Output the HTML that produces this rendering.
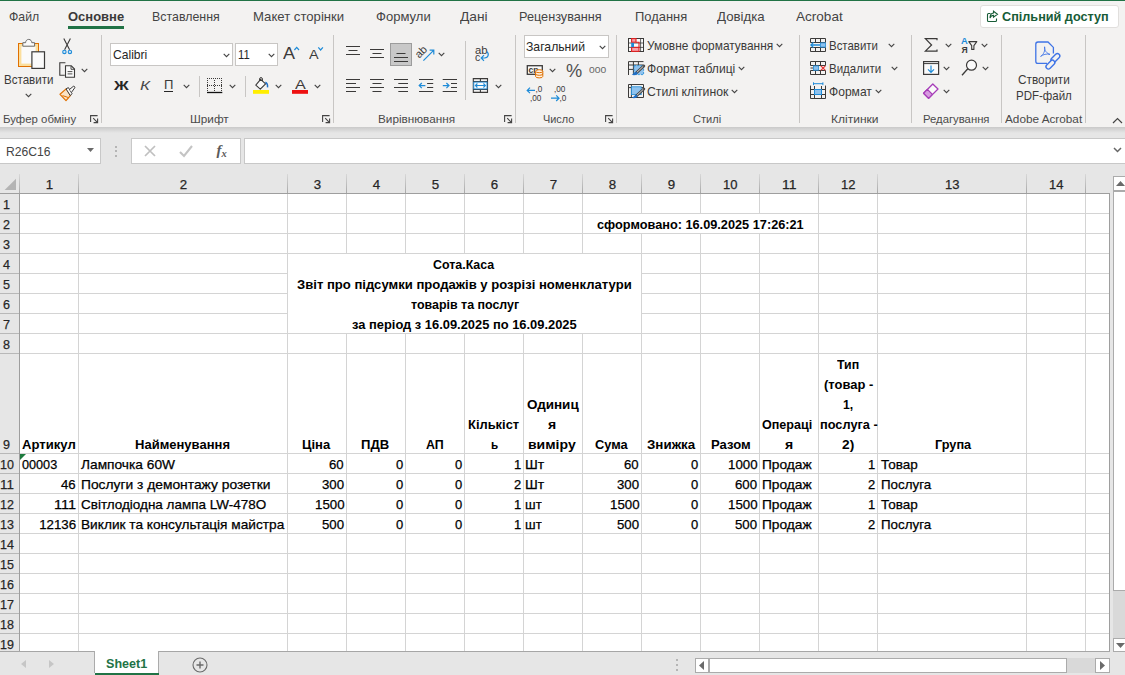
<!DOCTYPE html>
<html lang="uk"><head><meta charset="utf-8"><title>Excel</title>
<style>
html,body{margin:0;padding:0;}
body{width:1125px;height:675px;overflow:hidden;position:relative;background:#e6e6e6;font-family:"Liberation Sans",sans-serif;}
div{position:absolute;}
svg{position:absolute;overflow:visible;}
.t{position:absolute;white-space:nowrap;display:block;}
</style></head>
<body>
<div style="left:0px;top:0px;width:1125px;height:127px;background:#f3f2f1;"></div>
<div style="left:0px;top:0px;width:1125px;height:1px;background:#217346;"></div>
<div style="left:0px;top:127px;width:1125px;height:6px;background:linear-gradient(#c9c9c9,#e6e6e6);"></div>
<div style="left:0px;top:138px;width:101px;height:26px;background:#fff;border:1px solid #c8c8c8;box-sizing:border-box;border-left:none;"></div>
<div style="left:131px;top:138px;width:110px;height:26px;background:#fff;border:1px solid #c8c8c8;box-sizing:border-box;"></div>
<div style="left:244px;top:138px;width:881px;height:26px;background:#fff;border:1px solid #c8c8c8;box-sizing:border-box;border-right:none;"></div>
<div style="left:20px;top:194px;width:1089px;height:457px;background:#fff;"></div>
<div style="left:0px;top:193px;width:1110px;height:1px;background:#9e9e9e;"></div>
<div style="left:19px;top:174px;width:1px;height:19px;background:linear-gradient(#d8d8d8,#a8a8a8);"></div>
<div style="left:78px;top:174px;width:1px;height:19px;background:linear-gradient(#d8d8d8,#a8a8a8);"></div>
<div style="left:287px;top:174px;width:1px;height:19px;background:linear-gradient(#d8d8d8,#a8a8a8);"></div>
<div style="left:346px;top:174px;width:1px;height:19px;background:linear-gradient(#d8d8d8,#a8a8a8);"></div>
<div style="left:405px;top:174px;width:1px;height:19px;background:linear-gradient(#d8d8d8,#a8a8a8);"></div>
<div style="left:464px;top:174px;width:1px;height:19px;background:linear-gradient(#d8d8d8,#a8a8a8);"></div>
<div style="left:523px;top:174px;width:1px;height:19px;background:linear-gradient(#d8d8d8,#a8a8a8);"></div>
<div style="left:582px;top:174px;width:1px;height:19px;background:linear-gradient(#d8d8d8,#a8a8a8);"></div>
<div style="left:641px;top:174px;width:1px;height:19px;background:linear-gradient(#d8d8d8,#a8a8a8);"></div>
<div style="left:700px;top:174px;width:1px;height:19px;background:linear-gradient(#d8d8d8,#a8a8a8);"></div>
<div style="left:759px;top:174px;width:1px;height:19px;background:linear-gradient(#d8d8d8,#a8a8a8);"></div>
<div style="left:818px;top:174px;width:1px;height:19px;background:linear-gradient(#d8d8d8,#a8a8a8);"></div>
<div style="left:877px;top:174px;width:1px;height:19px;background:linear-gradient(#d8d8d8,#a8a8a8);"></div>
<div style="left:1026px;top:174px;width:1px;height:19px;background:linear-gradient(#d8d8d8,#a8a8a8);"></div>
<div style="left:1085px;top:174px;width:1px;height:19px;background:linear-gradient(#d8d8d8,#a8a8a8);"></div>
<div style="left:19px;top:194px;width:1px;height:458px;background:#9e9e9e;"></div>
<div style="left:0px;top:213px;width:19px;height:1px;background:#b8b8b8;"></div>
<div style="left:0px;top:233px;width:19px;height:1px;background:#b8b8b8;"></div>
<div style="left:0px;top:253px;width:19px;height:1px;background:#b8b8b8;"></div>
<div style="left:0px;top:273px;width:19px;height:1px;background:#b8b8b8;"></div>
<div style="left:0px;top:293px;width:19px;height:1px;background:#b8b8b8;"></div>
<div style="left:0px;top:313px;width:19px;height:1px;background:#b8b8b8;"></div>
<div style="left:0px;top:333px;width:19px;height:1px;background:#b8b8b8;"></div>
<div style="left:0px;top:353px;width:19px;height:1px;background:#b8b8b8;"></div>
<div style="left:0px;top:453px;width:19px;height:1px;background:#b8b8b8;"></div>
<div style="left:0px;top:473px;width:19px;height:1px;background:#b8b8b8;"></div>
<div style="left:0px;top:493px;width:19px;height:1px;background:#b8b8b8;"></div>
<div style="left:0px;top:513px;width:19px;height:1px;background:#b8b8b8;"></div>
<div style="left:0px;top:533px;width:19px;height:1px;background:#b8b8b8;"></div>
<div style="left:0px;top:553px;width:19px;height:1px;background:#b8b8b8;"></div>
<div style="left:0px;top:573px;width:19px;height:1px;background:#b8b8b8;"></div>
<div style="left:0px;top:593px;width:19px;height:1px;background:#b8b8b8;"></div>
<div style="left:0px;top:613px;width:19px;height:1px;background:#b8b8b8;"></div>
<div style="left:0px;top:633px;width:19px;height:1px;background:#b8b8b8;"></div>
<div style="left:1109px;top:194px;width:1px;height:458px;background:#9e9e9e;"></div>
<div style="left:0px;top:651px;width:1110px;height:1px;background:#a6a6a6;"></div>
<div style="left:20px;top:213px;width:1089px;height:1px;background:#d4d4d4;"></div>
<div style="left:20px;top:233px;width:1089px;height:1px;background:#d4d4d4;"></div>
<div style="left:20px;top:253px;width:1089px;height:1px;background:#d4d4d4;"></div>
<div style="left:20px;top:273px;width:268px;height:1px;background:#d4d4d4;"></div>
<div style="left:641px;top:273px;width:468px;height:1px;background:#d4d4d4;"></div>
<div style="left:20px;top:293px;width:268px;height:1px;background:#d4d4d4;"></div>
<div style="left:641px;top:293px;width:468px;height:1px;background:#d4d4d4;"></div>
<div style="left:20px;top:313px;width:268px;height:1px;background:#d4d4d4;"></div>
<div style="left:641px;top:313px;width:468px;height:1px;background:#d4d4d4;"></div>
<div style="left:20px;top:333px;width:1089px;height:1px;background:#d4d4d4;"></div>
<div style="left:20px;top:353px;width:1089px;height:1px;background:#d4d4d4;"></div>
<div style="left:20px;top:453px;width:1089px;height:1px;background:#d4d4d4;"></div>
<div style="left:20px;top:473px;width:1089px;height:1px;background:#d4d4d4;"></div>
<div style="left:20px;top:493px;width:1089px;height:1px;background:#d4d4d4;"></div>
<div style="left:20px;top:513px;width:1089px;height:1px;background:#d4d4d4;"></div>
<div style="left:20px;top:533px;width:1089px;height:1px;background:#d4d4d4;"></div>
<div style="left:20px;top:553px;width:1089px;height:1px;background:#d4d4d4;"></div>
<div style="left:20px;top:573px;width:1089px;height:1px;background:#d4d4d4;"></div>
<div style="left:20px;top:593px;width:1089px;height:1px;background:#d4d4d4;"></div>
<div style="left:20px;top:613px;width:1089px;height:1px;background:#d4d4d4;"></div>
<div style="left:20px;top:633px;width:1089px;height:1px;background:#d4d4d4;"></div>
<div style="left:78px;top:194px;width:1px;height:457px;background:#d4d4d4;"></div>
<div style="left:287px;top:194px;width:1px;height:457px;background:#d4d4d4;"></div>
<div style="left:346px;top:194px;width:1px;height:59px;background:#d4d4d4;"></div>
<div style="left:346px;top:334px;width:1px;height:317px;background:#d4d4d4;"></div>
<div style="left:405px;top:194px;width:1px;height:59px;background:#d4d4d4;"></div>
<div style="left:405px;top:334px;width:1px;height:317px;background:#d4d4d4;"></div>
<div style="left:464px;top:194px;width:1px;height:59px;background:#d4d4d4;"></div>
<div style="left:464px;top:334px;width:1px;height:317px;background:#d4d4d4;"></div>
<div style="left:523px;top:194px;width:1px;height:59px;background:#d4d4d4;"></div>
<div style="left:523px;top:334px;width:1px;height:317px;background:#d4d4d4;"></div>
<div style="left:582px;top:194px;width:1px;height:59px;background:#d4d4d4;"></div>
<div style="left:582px;top:334px;width:1px;height:317px;background:#d4d4d4;"></div>
<div style="left:641px;top:194px;width:1px;height:19px;background:#d4d4d4;"></div>
<div style="left:641px;top:234px;width:1px;height:417px;background:#d4d4d4;"></div>
<div style="left:700px;top:194px;width:1px;height:19px;background:#d4d4d4;"></div>
<div style="left:700px;top:234px;width:1px;height:417px;background:#d4d4d4;"></div>
<div style="left:759px;top:194px;width:1px;height:19px;background:#d4d4d4;"></div>
<div style="left:759px;top:234px;width:1px;height:417px;background:#d4d4d4;"></div>
<div style="left:818px;top:194px;width:1px;height:457px;background:#d4d4d4;"></div>
<div style="left:877px;top:194px;width:1px;height:457px;background:#d4d4d4;"></div>
<div style="left:1026px;top:194px;width:1px;height:457px;background:#d4d4d4;"></div>
<div style="left:1085px;top:194px;width:1px;height:457px;background:#d4d4d4;"></div>
<svg style="left:20px;top:454px" width="6" height="6"><path d="M0 0H6L0 6Z" fill="#1e7b3e"/></svg>
<svg style="left:4px;top:178px" width="13" height="13"><path d="M12 0.8V12H0.6Z" fill="#b4b4b4"/></svg>
<div style="left:68px;top:26px;width:56px;height:3px;background:#217346;"></div>
<div style="left:980px;top:5px;width:139px;height:23px;background:#fff;border:1px solid #e1dfdd;box-sizing:border-box;border-radius:3px;"></div>
<svg style="left:986px;top:10px" width="13" height="13" viewBox="0 0 13 13" fill="none" stroke="#185c37" stroke-width="1.1"><path d="M4.5 3.5H2.5a1 1 0 0 0-1 1v6a1 1 0 0 0 1 1h7a1 1 0 0 0 1-1V8.5"/><path d="M7.5 1.2 11.5 4.2 7.5 7.2V5.4C5.6 5.4 4.6 6.3 4 8 4 5 5.4 3.2 7.5 3Z"/></svg>
<div style="left:101px;top:35px;width:1px;height:88px;background:#c8c6c4;"></div>
<div style="left:333px;top:35px;width:1px;height:88px;background:#c8c6c4;"></div>
<div style="left:515px;top:35px;width:1px;height:88px;background:#c8c6c4;"></div>
<div style="left:616px;top:35px;width:1px;height:88px;background:#c8c6c4;"></div>
<div style="left:799px;top:35px;width:1px;height:88px;background:#c8c6c4;"></div>
<div style="left:911px;top:35px;width:1px;height:88px;background:#c8c6c4;"></div>
<div style="left:1001px;top:35px;width:1px;height:88px;background:#c8c6c4;"></div>
<div style="left:1085px;top:35px;width:1px;height:88px;background:#c8c6c4;"></div>
<div style="left:199px;top:76px;width:1px;height:21px;background:#c8c6c4;"></div>
<div style="left:245px;top:76px;width:1px;height:21px;background:#c8c6c4;"></div>
<div style="left:465px;top:41px;width:1px;height:59px;background:#c8c6c4;"></div>
<svg style="left:89.5px;top:115px" width="9" height="9" viewBox="0 0 9 9" fill="none" stroke="#444" stroke-width="1.1"><path d="M0.6 7V0.6H7.6"/><path d="M3.2 3.2 7.6 7.6M7.6 3.6V7.6H3.6"/></svg>
<svg style="left:321.5px;top:115px" width="9" height="9" viewBox="0 0 9 9" fill="none" stroke="#444" stroke-width="1.1"><path d="M0.6 7V0.6H7.6"/><path d="M3.2 3.2 7.6 7.6M7.6 3.6V7.6H3.6"/></svg>
<svg style="left:503.5px;top:115px" width="9" height="9" viewBox="0 0 9 9" fill="none" stroke="#444" stroke-width="1.1"><path d="M0.6 7V0.6H7.6"/><path d="M3.2 3.2 7.6 7.6M7.6 3.6V7.6H3.6"/></svg>
<svg style="left:604.5px;top:115px" width="9" height="9" viewBox="0 0 9 9" fill="none" stroke="#444" stroke-width="1.1"><path d="M0.6 7V0.6H7.6"/><path d="M3.2 3.2 7.6 7.6M7.6 3.6V7.6H3.6"/></svg>
<svg style="left:1112px;top:117px" width="11" height="7" viewBox="0 0 11 7" fill="none" stroke="#444" stroke-width="1.2"><path d="M1 6 5.5 1.5 10 6"/></svg>
<svg style="left:25.1px;top:93px" width="7" height="5" viewBox="0 0 7 5" fill="none" stroke="#444" stroke-width="1.1"><path d="M0.7 0.8 3.5 3.6 6.3 0.8"/></svg>
<svg style="left:81.1px;top:68px" width="7" height="5" viewBox="0 0 7 5" fill="none" stroke="#444" stroke-width="1.1"><path d="M0.7 0.8 3.5 3.6 6.3 0.8"/></svg>
<div style="left:110px;top:43px;width:123px;height:23px;background:#fff;border:1px solid #c8c6c4;box-sizing:border-box;"></div>
<div style="left:235px;top:43px;width:43px;height:23px;background:#fff;border:1px solid #c8c6c4;box-sizing:border-box;"></div>
<svg style="left:222.5px;top:53px" width="7" height="5" viewBox="0 0 7 5" fill="none" stroke="#444" stroke-width="1.1"><path d="M0.7 0.8 3.5 3.6 6.3 0.8"/></svg>
<svg style="left:267.8px;top:53px" width="7" height="5" viewBox="0 0 7 5" fill="none" stroke="#444" stroke-width="1.1"><path d="M0.7 0.8 3.5 3.6 6.3 0.8"/></svg>
<div style="left:164px;top:91px;width:9px;height:1px;background:#262626;"></div>
<svg style="left:182.7px;top:84px" width="7" height="5" viewBox="0 0 7 5" fill="none" stroke="#444" stroke-width="1.1"><path d="M0.7 0.8 3.5 3.6 6.3 0.8"/></svg>
<svg style="left:228.7px;top:84px" width="7" height="5" viewBox="0 0 7 5" fill="none" stroke="#444" stroke-width="1.1"><path d="M0.7 0.8 3.5 3.6 6.3 0.8"/></svg>
<svg style="left:275.0px;top:84px" width="7" height="5" viewBox="0 0 7 5" fill="none" stroke="#444" stroke-width="1.1"><path d="M0.7 0.8 3.5 3.6 6.3 0.8"/></svg>
<svg style="left:313.8px;top:84px" width="7" height="5" viewBox="0 0 7 5" fill="none" stroke="#444" stroke-width="1.1"><path d="M0.7 0.8 3.5 3.6 6.3 0.8"/></svg>
<div style="left:524px;top:35px;width:85px;height:23px;background:#fff;border:1px solid #c8c6c4;box-sizing:border-box;"></div>
<svg style="left:598.9px;top:45.4px" width="7" height="5" viewBox="0 0 7 5" fill="none" stroke="#444" stroke-width="1.1"><path d="M0.7 0.8 3.5 3.6 6.3 0.8"/></svg>
<svg style="left:549.0px;top:68.2px" width="7" height="5" viewBox="0 0 7 5" fill="none" stroke="#444" stroke-width="1.1"><path d="M0.7 0.8 3.5 3.6 6.3 0.8"/></svg>
<svg style="left:775.8px;top:43.3px" width="7" height="5" viewBox="0 0 7 5" fill="none" stroke="#444" stroke-width="1.1"><path d="M0.7 0.8 3.5 3.6 6.3 0.8"/></svg>
<svg style="left:738.0px;top:66.3px" width="7" height="5" viewBox="0 0 7 5" fill="none" stroke="#444" stroke-width="1.1"><path d="M0.7 0.8 3.5 3.6 6.3 0.8"/></svg>
<svg style="left:731.0px;top:89.3px" width="7" height="5" viewBox="0 0 7 5" fill="none" stroke="#444" stroke-width="1.1"><path d="M0.7 0.8 3.5 3.6 6.3 0.8"/></svg>
<svg style="left:887.8px;top:43.3px" width="7" height="5" viewBox="0 0 7 5" fill="none" stroke="#444" stroke-width="1.1"><path d="M0.7 0.8 3.5 3.6 6.3 0.8"/></svg>
<svg style="left:891.0px;top:66.3px" width="7" height="5" viewBox="0 0 7 5" fill="none" stroke="#444" stroke-width="1.1"><path d="M0.7 0.8 3.5 3.6 6.3 0.8"/></svg>
<svg style="left:875.1px;top:89.3px" width="7" height="5" viewBox="0 0 7 5" fill="none" stroke="#444" stroke-width="1.1"><path d="M0.7 0.8 3.5 3.6 6.3 0.8"/></svg>
<svg style="left:944.5px;top:43.3px" width="7" height="5" viewBox="0 0 7 5" fill="none" stroke="#444" stroke-width="1.1"><path d="M0.7 0.8 3.5 3.6 6.3 0.8"/></svg>
<svg style="left:981.3px;top:43.3px" width="7" height="5" viewBox="0 0 7 5" fill="none" stroke="#444" stroke-width="1.1"><path d="M0.7 0.8 3.5 3.6 6.3 0.8"/></svg>
<svg style="left:942.5px;top:66.3px" width="7" height="5" viewBox="0 0 7 5" fill="none" stroke="#444" stroke-width="1.1"><path d="M0.7 0.8 3.5 3.6 6.3 0.8"/></svg>
<svg style="left:981.5px;top:66.3px" width="7" height="5" viewBox="0 0 7 5" fill="none" stroke="#444" stroke-width="1.1"><path d="M0.7 0.8 3.5 3.6 6.3 0.8"/></svg>
<svg style="left:942.5px;top:89.3px" width="7" height="5" viewBox="0 0 7 5" fill="none" stroke="#444" stroke-width="1.1"><path d="M0.7 0.8 3.5 3.6 6.3 0.8"/></svg>
<svg style="left:438.0px;top:52.4px" width="7" height="5" viewBox="0 0 7 5" fill="none" stroke="#444" stroke-width="1.1"><path d="M0.7 0.8 3.5 3.6 6.3 0.8"/></svg>
<svg style="left:495.0px;top:84px" width="7" height="5" viewBox="0 0 7 5" fill="none" stroke="#444" stroke-width="1.1"><path d="M0.7 0.8 3.5 3.6 6.3 0.8"/></svg>
<svg style="left:87px;top:148px" width="7" height="4"><path d="M0 0H7L3.5 4Z" fill="#6a6a6a"/></svg>
<div style="left:115px;top:146px;width:2px;height:2px;background:#b5b5b5;"></div>
<div style="left:115px;top:150px;width:2px;height:2px;background:#b5b5b5;"></div>
<div style="left:115px;top:155px;width:2px;height:2px;background:#b5b5b5;"></div>
<svg style="left:144px;top:145px" width="12" height="12" viewBox="0 0 12 12" fill="none" stroke="#c0c0c0" stroke-width="1.7"><path d="M1 1 11 11M11 1 1 11"/></svg>
<svg style="left:179px;top:145px" width="14" height="12" viewBox="0 0 14 12" fill="none" stroke="#c4c4c4" stroke-width="2.1"><path d="M1 7 5 11 13 1"/></svg>
<span class="t" style="left:216.5px;top:141px;font:italic bold 15px 'Liberation Serif',serif;color:#5a5a5a;line-height:18px">f<span style="font-size:10.5px;position:relative;top:1.5px">x</span></span>
<svg style="left:1113px;top:147px" width="9" height="6" viewBox="0 0 9 6" fill="none" stroke="#666" stroke-width="1.5"><path d="M1 1 4.5 4.5 8 1"/></svg>
<div style="left:95px;top:651px;width:64px;height:24px;background:#fff;"></div>
<div style="left:94px;top:651px;width:1px;height:22px;background:#ababab;"></div>
<div style="left:158px;top:651px;width:1px;height:22px;background:#ababab;"></div>
<div style="left:95px;top:673px;width:64px;height:2px;background:#217346;"></div>
<svg style="left:21px;top:660px" width="5" height="8"><path d="M5 0V8L0 4Z" fill="#c6c6c6"/></svg>
<svg style="left:49px;top:660px" width="5" height="8"><path d="M0 0V8L5 4Z" fill="#c6c6c6"/></svg>
<svg style="left:192px;top:657px" width="16" height="16" viewBox="0 0 16 16" fill="none" stroke="#6a6a6a" stroke-width="1.1"><circle cx="8" cy="8" r="7"/><path d="M8 4.5V11.5M4.5 8H11.5" stroke-width="1.4"/></svg>
<div style="left:676px;top:659px;width:2px;height:2px;background:#b5b5b5;"></div>
<div style="left:676px;top:664px;width:2px;height:2px;background:#b5b5b5;"></div>
<div style="left:676px;top:669px;width:2px;height:2px;background:#b5b5b5;"></div>
<div style="left:695px;top:658px;width:14px;height:15px;background:#fff;border:1px solid #ababab;box-sizing:border-box;"></div>
<svg style="left:699px;top:661px" width="5" height="9"><path d="M5 0V9L0 4.5Z" fill="#6a6a6a"/></svg>
<div style="left:709px;top:658px;width:386px;height:15px;background:#d9d9d9;"></div>
<div style="left:709px;top:658px;width:358px;height:15px;background:#fff;border:1px solid #ababab;box-sizing:border-box;"></div>
<div style="left:1095px;top:658px;width:15px;height:15px;background:#fff;border:1px solid #ababab;box-sizing:border-box;"></div>
<svg style="left:1100px;top:661px" width="5" height="9"><path d="M0 0V9L5 4.5Z" fill="#6a6a6a"/></svg>
<div style="left:1113px;top:176px;width:12px;height:476px;background:#d9d9d9;"></div>
<div style="left:1113px;top:176px;width:13px;height:15px;background:#fff;border:1px solid #ababab;box-sizing:border-box;"></div>
<svg style="left:1116px;top:181px" width="9" height="5"><path d="M0 5H9L4.5 0Z" fill="#6a6a6a"/></svg>
<div style="left:1113px;top:191px;width:13px;height:400px;background:#fff;border:1px solid #ababab;box-sizing:border-box;"></div>
<div style="left:1113px;top:638px;width:13px;height:14px;background:#fff;border:1px solid #ababab;box-sizing:border-box;"></div>
<svg style="left:1116px;top:643px" width="9" height="5"><path d="M0 0H9L4.5 5Z" fill="#6a6a6a"/></svg>
<svg style="left:0;top:0" width="1125" height="135" viewBox="0 0 1125 135"><rect x="18" y="43" width="21" height="24" fill="#e07000"/>
<rect x="19" y="44" width="19" height="22" fill="#fbdf9e"/>
<rect x="21.4" y="46.4" width="14.2" height="17.2" fill="#fafafa"/>
<path d="M22.8 46.2V42.7H25.6C25.6 41 26.8 39.4 28.7 39.4C30.6 39.4 31.8 41 31.8 42.7H34.6V46.2Z" fill="#fafafa" stroke="#6a6a6a" stroke-width="1"/>
<rect x="31.9" y="51.8" width="12.6" height="16.6" fill="#fafafa" stroke="#3b3a39" stroke-width="1.2"/>
<path d="M63.8 38.6 69.6 49.8M70.4 38.6 64.6 49.8" stroke="#3b3a39" stroke-width="1.1" fill="none"/>
<circle cx="64.4" cy="51.9" r="1.7" fill="#cfe6f7" stroke="#1e8bd8" stroke-width="1.1"/><circle cx="69.9" cy="51.9" r="1.7" fill="#cfe6f7" stroke="#1e8bd8" stroke-width="1.1"/>
<path d="M64.8 75.2H59.8V62.7H65.4" stroke="#3b3a39" stroke-width="1.1" fill="none"/>
<path d="M65.5 65.8H71.3L74.5 69V77.3H65.5Z" fill="#fafafa" stroke="#3b3a39" stroke-width="1.1"/><path d="M71 66V69.3H74.3" stroke="#3b3a39" stroke-width="0.9" fill="none"/><path d="M67.6 71.6H72.4M67.6 73.9H72.4" stroke="#3b3a39" stroke-width="0.9"/>
<path d="M60 94.3 66.4 88.6 70.6 95.4 66 100.6Z" fill="#fbe3c5" stroke="#e07000" stroke-width="1.2" stroke-linejoin="round"/><path d="M62.5 95.6 68.6 97.6" stroke="#e07000" stroke-width="1"/>
<path d="M66 88.9 68.4 87.6 72 93.6 70.3 95.6Z" fill="#fafafa" stroke="#3b3a39" stroke-width="1"/><path d="M69.6 89.4 73 86.6A1 1 0 0 1 74.6 88L71.6 92.2" fill="#fafafa" stroke="#3b3a39" stroke-width="1"/>
<path d="M294.4 50 296.7 47.4 299 50" stroke="#1e8bd8" stroke-width="1.2" fill="none"/>
<path d="M318.3 47.4 320.6 50 322.9 47.4" stroke="#1e8bd8" stroke-width="1.2" fill="none"/>
<path d="M207 78h1v1h-1zM207 85h1v1h-1zM209 78h1v1h-1zM209 85h1v1h-1zM211 78h1v1h-1zM211 85h1v1h-1zM213 78h1v1h-1zM213 85h1v1h-1zM215 78h1v1h-1zM215 85h1v1h-1zM217 78h1v1h-1zM217 85h1v1h-1zM219 78h1v1h-1zM219 85h1v1h-1zM221 78h1v1h-1zM221 85h1v1h-1zM207 80h1v1h-1zM214 80h1v1h-1zM221 80h1v1h-1zM207 82h1v1h-1zM214 82h1v1h-1zM221 82h1v1h-1zM207 84h1v1h-1zM214 84h1v1h-1zM221 84h1v1h-1zM207 86h1v1h-1zM214 86h1v1h-1zM221 86h1v1h-1zM207 88h1v1h-1zM214 88h1v1h-1zM221 88h1v1h-1zM207 90h1v1h-1zM214 90h1v1h-1zM221 90h1v1h-1z" fill="#3b3a39"/><path d="M207 92.5H222.3" stroke="#111" stroke-width="1.3"/>
<path d="M255.8 85.2 260.6 79.4 265.6 83.8 260.3 89.2Z" fill="#fafafa" stroke="#3b3a39" stroke-width="1.1" stroke-linejoin="round"/><path d="M259.6 80.4V79A1.4 1.4 0 0 1 262.4 79V81" fill="none" stroke="#3b3a39" stroke-width="1"/>
<path d="M265.4 82.2C267.2 83 267.8 85 267.5 87.4" stroke="#1e6fc8" stroke-width="1.5" fill="none"/>
<rect x="253" y="90" width="16" height="3.8" fill="#ffee00"/>
<rect x="292" y="90" width="16" height="3.8" fill="#ee1111"/>
<path d="M346 46.5H360M348.5 50.5H357.5M346 54.5H360" stroke="#3b3a39" stroke-width="1.1" fill="none"/>
<path d="M370 49.5H384M372.5 53.5H381.5M370 57.5H384" stroke="#3b3a39" stroke-width="1.1" fill="none"/>
<rect x="390.5" y="43.5" width="21" height="22" fill="#c8c8c8" stroke="#9c9c9c" stroke-width="1"/>
<path d="M396.5 53.5H405.5M394 57.5H408M394 61.5H408" stroke="#3b3a39" stroke-width="1.1" fill="none"/>
<path d="M346 79.5H360M346 83.5H356M346 87.5H360M346 91.5H356" stroke="#3b3a39" stroke-width="1.1" fill="none"/>
<path d="M370 79.5H384M372.5 83.5H381.5M370 87.5H384M372.5 91.5H381.5" stroke="#3b3a39" stroke-width="1.1" fill="none"/>
<path d="M394 79.5H408M398.3 83.5H408M394 87.5H408M398.3 91.5H408" stroke="#3b3a39" stroke-width="1.1" fill="none"/>
<path d="M419 79.5H433.2M427.1 83.5H433.2M427.1 87.5H433.2M419 91.5H433.2" stroke="#3b3a39" stroke-width="1.1" fill="none"/>
<path d="M442.7 79.5H457M451 83.5H457M451 87.5H457M442.7 91.5H457" stroke="#3b3a39" stroke-width="1.1" fill="none"/>
<path d="M419.2 85.6H425.4M421.8 83 419.2 85.6 421.8 88.2" stroke="#1e8bd8" stroke-width="1.2" fill="none"/>
<path d="M442.8 85.6H449M446.4 83 449 85.6 446.4 88.2" stroke="#1e8bd8" stroke-width="1.2" fill="none"/>
<text transform="translate(423.6 54.4) rotate(-45)" font-family="Liberation Sans, sans-serif" font-size="11" fill="#3b3a39" text-anchor="middle">ab</text>
<path d="M423.4 60.6 433.6 50.4M429.6 50.2H433.8V54.4" stroke="#1e8bd8" stroke-width="1.2" fill="none"/>
<text x="475" y="53.6" font-family="Liberation Sans, sans-serif" font-size="10.5" fill="#3b3a39" textLength="12.6" lengthAdjust="spacingAndGlyphs">ab</text><text x="475" y="61" font-family="Liberation Sans, sans-serif" font-size="10.5" fill="#3b3a39">c</text>
<path d="M486.6 51.5C489.4 53.4 488.6 58 484.6 58H481.4M484 55.2 481.2 58 484 60.8" stroke="#1e8bd8" stroke-width="1.2" fill="none"/>
<path d="M473.3 78.6H487.5V92.4H473.3ZM473.3 81.6H487.5M473.3 89.4H487.5M480.4 78.6V81.6M480.4 89.4V92.4" stroke="#3b3a39" stroke-width="1.1" fill="none"/>
<rect x="473.8" y="82.1" width="13.2" height="6.8" fill="#fafafa" stroke="#1e8bd8" stroke-width="0.9"/><path d="M475.4 85.5H485.4M477.4 83.5 475.4 85.5 477.4 87.5M483.4 83.5 485.4 85.5 483.4 87.5" stroke="#1e8bd8" stroke-width="1.1" fill="none"/>
<rect x="527.3" y="65.7" width="15" height="8.6" fill="#fafafa" stroke="#3b3a39" stroke-width="1.3"/><text x="528.6" y="73" font-family="Liberation Sans, sans-serif" font-size="8.6" font-weight="bold" fill="#3b3a39">cn</text>
<path d="M535.6 71.2V76.4A3.6 1.5 0 0 0 542.8 76.4V71.2" fill="#fff2e2" stroke="#e07000" stroke-width="1"/><ellipse cx="539.2" cy="71.2" rx="3.6" ry="1.5" fill="#fff2e2" stroke="#e07000" stroke-width="1"/><path d="M535.6 73.8A3.6 1.5 0 0 0 542.8 73.8" fill="none" stroke="#e07000" stroke-width="1"/>
<text x="535.4" y="92.2" font-family="Liberation Sans, sans-serif" font-size="8.2" fill="#3b3a39">,0</text><text x="530" y="100.6" font-family="Liberation Sans, sans-serif" font-size="8.2" fill="#3b3a39">,00</text>
<path d="M527.2 90.4H535M530 87.6 527.2 90.4 530 93.2" stroke="#1e8bd8" stroke-width="1.2" fill="none"/>
<text x="554" y="92.2" font-family="Liberation Sans, sans-serif" font-size="8.2" fill="#3b3a39">,00</text><text x="559.4" y="100.6" font-family="Liberation Sans, sans-serif" font-size="8.2" fill="#3b3a39">,0</text>
<path d="M551 98.2H559M556.2 95.4 559 98.2 556.2 101" stroke="#1e8bd8" stroke-width="1.2" fill="none"/>
<rect x="628.5" y="38.5" width="15" height="13" fill="#fafafa" stroke="#3b3a39" stroke-width="1"/><path d="M628.5 43H643.5M628.5 47.4H643.5M640.6 38.5V51.5" stroke="#3b3a39" stroke-width="0.8"/>
<rect x="631.6" y="38.6" width="4.4" height="3.6" fill="#f6a0aa" stroke="#e02020" stroke-width="1.1"/><rect x="631.6" y="47.4" width="7.4" height="4" fill="#f6a0aa" stroke="#e02020" stroke-width="1.1"/><path d="M636 42.2H639V47.4" fill="none" stroke="#e02020" stroke-width="1.1"/><rect x="631.2" y="42.8" width="2.8" height="4.4" fill="#1e8bd8"/>
<path d="M628.5 75V61.6H643.5M628.5 65H643.5M628.5 69.4H633M633.4 61.6V75M638.4 61.6V65" stroke="#3b3a39" stroke-width="1" fill="none"/><rect x="634" y="65.6" width="9.6" height="9" fill="#8ec2ee" stroke="#1e8bd8" stroke-width="0.8" stroke-dasharray="2 1.2"/>
<path d="M643.8 66.0L636.2 73.0" stroke="#4a4a4a" stroke-width="2.9" stroke-linecap="round"/><path d="M643.2 66.4L636.6 72.6" stroke="#e8e8e8" stroke-width="0.9"/><path d="M636.6 71.8C634.4 72.0 634.2 74.2 631.6 74.8C634.4 75.6 637.2 75.0 637.6 73.0Z" fill="#1e6fc8"/>
<path d="M628.5 84.5H643.5V97.5H628.5ZM628.5 87.6H643.5M631.4 84.5V97.5" stroke="#3b3a39" stroke-width="1" fill="none"/><rect x="631.6" y="86.8" width="9.6" height="7.8" fill="#8ec2ee" stroke="#1e8bd8" stroke-width="0.8"/>
<path d="M643.8 89.0L636.2 96.0" stroke="#4a4a4a" stroke-width="2.9" stroke-linecap="round"/><path d="M643.2 89.39999999999999L636.6 95.6" stroke="#e8e8e8" stroke-width="0.9"/><path d="M636.6 94.8C634.4 95.0 634.2 97.19999999999999 631.6 97.8C634.4 98.6 637.2 98.0 637.6 96.0Z" fill="#1e6fc8"/>
<path d="M810.5 42.5V38.5H825.5V42.5M825.5 47.5V51.5H810.5V47.5M815.5 38.5V42.5M820.5 38.5V42.5M815.5 47.5V51.5M820.5 47.5V51.5M810.5 42.5H825.5M810.5 47.5H825.5" stroke="#3b3a39" stroke-width="1" fill="none"/>
<rect x="820.5" y="42.9" width="5" height="4.2" fill="#8ec2ee" stroke="#1e8bd8" stroke-width="0.8"/><path d="M810.9 45H820M813.5 42.4 810.9 45 813.5 47.6" stroke="#1e8bd8" stroke-width="1.3" fill="none"/>
<path d="M810.5 65.5V61.5H825.5V65.5M810.5 70.5V74.5H825.5V70.5M815.5 61.5V65.5M820.5 61.5V65.5M815.5 70.5V74.5M820.5 70.5V74.5M810.5 65.5H825.5M810.5 70.5H825.5M810.5 68H813.4" stroke="#3b3a39" stroke-width="1" fill="none"/>
<rect x="813.6" y="65.9" width="4.8" height="4.3" fill="#8ec2ee" stroke="#1e8bd8" stroke-width="0.8"/><path d="M820.9 65.9 825.3 70.3M825.3 65.9 820.9 70.3" stroke="#e83030" stroke-width="1.2"/>
<path d="M810.5 85.6V98.5H825.5V85.6M810.5 89.5H825.5M810.5 94.5H825.5M814.5 86V98.5M821.5 86V98.5" stroke="#3b3a39" stroke-width="1" fill="none"/>
<rect x="814.5" y="89.5" width="7" height="5" fill="#8ec2ee" stroke="#1e8bd8" stroke-width="1"/><path d="M813.4 83.7H823M813.5 82.3V85.1M822.9 82.3V85.1" stroke="#1e8bd8" stroke-width="1" fill="none"/>
<path d="M937 40.2V38.7H925.4L931.6 45 925.4 51.2H937V49.6" stroke="#3b3a39" stroke-width="1.2" fill="none"/>
<text x="961" y="43.6" font-family="Liberation Sans, sans-serif" font-size="9.4" font-weight="bold" fill="#1e8bd8">A</text><text x="961.4" y="52.6" font-family="Liberation Sans, sans-serif" font-size="8.6" font-weight="bold" fill="#3b3a39">Я</text>
<path d="M968.8 41.6H976.8L973.9 45.6V49.4H971.7V45.6Z" stroke="#3b3a39" stroke-width="1.1" fill="none" stroke-linejoin="round"/>
<rect x="923.6" y="61.6" width="15" height="12.8" fill="#fafafa" stroke="#3b3a39" stroke-width="1.2"/><path d="M923.6 63.6H938.6" stroke="#3b3a39" stroke-width="1"/><path d="M931 65.6V72.2M928 69.4 931 72.4 934 69.4" stroke="#1e8bd8" stroke-width="1.2" fill="none"/>
<circle cx="971.5" cy="65.2" r="5" fill="#fafafa" stroke="#3b3a39" stroke-width="1.2"/><path d="M967.8 68.8 962 75.2" stroke="#3b3a39" stroke-width="1.3"/>
<path d="M923.6 93.2 932.8 84 938 89 928.6 98.4Z" fill="#fafafa" stroke="#a63db8" stroke-width="1.3" stroke-linejoin="round"/><path d="M923.6 93.2 927.4 89.4 932.4 94.4 928.6 98.4Z" fill="#d79be0" stroke="#a63db8" stroke-width="1.3" stroke-linejoin="round"/>
<path d="M1047 63.4H1038A2.2 2.2 0 0 1 1035.8 61.2V44.2A2.2 2.2 0 0 1 1038 42H1048L1053.4 47.4V53.6" stroke="#3f74e6" stroke-width="1.3" fill="none"/>
<path d="M1040.6 56.4C1043.6 54.6 1045.4 50.6 1044.6 46.8C1044 50.4 1047 53.6 1050 54.4C1046.6 53.4 1043 54.6 1040.6 56.4Z" stroke="#3f74e6" stroke-width="0.9" fill="none" stroke-linejoin="round"/>
<g fill="#f3f2f1" stroke="#3f74e6" stroke-width="1.4"><rect x="-5.2" y="-2.4" width="10.4" height="4.8" rx="2.4" transform="translate(1055.4 58) rotate(-45)"/><rect x="-5.2" y="-2.4" width="10.4" height="4.8" rx="2.4" transform="translate(1050.4 64.6) rotate(-45)"/></g></svg>
<span id="t0" class="t" style="font-size:13.3px;line-height:15px;top:177.00px;color:#262626;-webkit-text-stroke:0.25px #262626;left:45.80px;transform-origin:0 0;">1</span>
<span id="t1" class="t" style="font-size:13.3px;line-height:15px;top:177.00px;color:#262626;-webkit-text-stroke:0.25px #262626;left:179.80px;transform-origin:0 0;">2</span>
<span id="t2" class="t" style="font-size:13.3px;line-height:15px;top:177.00px;color:#262626;-webkit-text-stroke:0.25px #262626;left:313.80px;transform-origin:0 0;">3</span>
<span id="t3" class="t" style="font-size:13.3px;line-height:15px;top:177.00px;color:#262626;-webkit-text-stroke:0.25px #262626;left:372.80px;transform-origin:0 0;">4</span>
<span id="t4" class="t" style="font-size:13.3px;line-height:15px;top:177.00px;color:#262626;-webkit-text-stroke:0.25px #262626;left:431.80px;transform-origin:0 0;">5</span>
<span id="t5" class="t" style="font-size:13.3px;line-height:15px;top:177.00px;color:#262626;-webkit-text-stroke:0.25px #262626;left:490.80px;transform-origin:0 0;">6</span>
<span id="t6" class="t" style="font-size:13.3px;line-height:15px;top:177.00px;color:#262626;-webkit-text-stroke:0.25px #262626;left:549.80px;transform-origin:0 0;">7</span>
<span id="t7" class="t" style="font-size:13.3px;line-height:15px;top:177.00px;color:#262626;-webkit-text-stroke:0.25px #262626;left:608.80px;transform-origin:0 0;">8</span>
<span id="t8" class="t" style="font-size:13.3px;line-height:15px;top:177.00px;color:#262626;-webkit-text-stroke:0.25px #262626;left:667.80px;transform-origin:0 0;">9</span>
<span id="t9" class="t" style="font-size:13.3px;line-height:15px;top:177.00px;color:#262626;-webkit-text-stroke:0.25px #262626;left:723.25px;transform-origin:0 0;transform:scaleX(0.9799);">10</span>
<span id="t10" class="t" style="font-size:13.3px;line-height:15px;top:177.00px;color:#262626;-webkit-text-stroke:0.25px #262626;left:782.25px;transform-origin:0 0;transform:scaleX(1.0498);">11</span>
<span id="t11" class="t" style="font-size:13.3px;line-height:15px;top:177.00px;color:#262626;-webkit-text-stroke:0.25px #262626;left:841.25px;transform-origin:0 0;transform:scaleX(0.9799);">12</span>
<span id="t12" class="t" style="font-size:13.3px;line-height:15px;top:177.00px;color:#262626;-webkit-text-stroke:0.25px #262626;left:945.25px;transform-origin:0 0;transform:scaleX(0.9799);">13</span>
<span id="t13" class="t" style="font-size:13.3px;line-height:15px;top:177.00px;color:#262626;-webkit-text-stroke:0.25px #262626;left:1049.25px;transform-origin:0 0;transform:scaleX(0.9799);">14</span>
<span id="t14" class="t" style="font-size:13.3px;line-height:15px;top:197.00px;color:#262626;-webkit-text-stroke:0.25px #262626;left:3.10px;transform-origin:0 0;transform:scaleX(0.9451);">1</span>
<span id="t15" class="t" style="font-size:13.3px;line-height:15px;top:217.00px;color:#262626;-webkit-text-stroke:0.25px #262626;left:3.10px;transform-origin:0 0;transform:scaleX(0.9451);">2</span>
<span id="t16" class="t" style="font-size:13.3px;line-height:15px;top:237.00px;color:#262626;-webkit-text-stroke:0.25px #262626;left:3.10px;transform-origin:0 0;transform:scaleX(0.9451);">3</span>
<span id="t17" class="t" style="font-size:13.3px;line-height:15px;top:257.00px;color:#262626;-webkit-text-stroke:0.25px #262626;left:3.10px;transform-origin:0 0;transform:scaleX(0.9451);">4</span>
<span id="t18" class="t" style="font-size:13.3px;line-height:15px;top:277.00px;color:#262626;-webkit-text-stroke:0.25px #262626;left:3.10px;transform-origin:0 0;transform:scaleX(0.9451);">5</span>
<span id="t19" class="t" style="font-size:13.3px;line-height:15px;top:297.00px;color:#262626;-webkit-text-stroke:0.25px #262626;left:3.10px;transform-origin:0 0;transform:scaleX(0.9451);">6</span>
<span id="t20" class="t" style="font-size:13.3px;line-height:15px;top:317.00px;color:#262626;-webkit-text-stroke:0.25px #262626;left:3.10px;transform-origin:0 0;transform:scaleX(0.9451);">7</span>
<span id="t21" class="t" style="font-size:13.3px;line-height:15px;top:337.00px;color:#262626;-webkit-text-stroke:0.25px #262626;left:3.10px;transform-origin:0 0;transform:scaleX(0.9451);">8</span>
<span id="t22" class="t" style="font-size:13.3px;line-height:15px;top:437.00px;color:#262626;-webkit-text-stroke:0.25px #262626;left:3.10px;transform-origin:0 0;transform:scaleX(0.9451);">9</span>
<span id="t23" class="t" style="font-size:13.3px;line-height:15px;top:457.00px;color:#262626;-webkit-text-stroke:0.25px #262626;left:0.35px;transform-origin:0 0;transform:scaleX(0.9394);">10</span>
<span id="t24" class="t" style="font-size:13.3px;line-height:15px;top:477.00px;color:#262626;-webkit-text-stroke:0.25px #262626;left:0.35px;transform-origin:0 0;transform:scaleX(1.0063);">11</span>
<span id="t25" class="t" style="font-size:13.3px;line-height:15px;top:497.00px;color:#262626;-webkit-text-stroke:0.25px #262626;left:0.35px;transform-origin:0 0;transform:scaleX(0.9394);">12</span>
<span id="t26" class="t" style="font-size:13.3px;line-height:15px;top:517.00px;color:#262626;-webkit-text-stroke:0.25px #262626;left:0.35px;transform-origin:0 0;transform:scaleX(0.9394);">13</span>
<span id="t27" class="t" style="font-size:13.3px;line-height:15px;top:537.00px;color:#262626;-webkit-text-stroke:0.25px #262626;left:0.35px;transform-origin:0 0;transform:scaleX(0.9394);">14</span>
<span id="t28" class="t" style="font-size:13.3px;line-height:15px;top:557.00px;color:#262626;-webkit-text-stroke:0.25px #262626;left:0.35px;transform-origin:0 0;transform:scaleX(0.9394);">15</span>
<span id="t29" class="t" style="font-size:13.3px;line-height:15px;top:577.00px;color:#262626;-webkit-text-stroke:0.25px #262626;left:0.35px;transform-origin:0 0;transform:scaleX(0.9394);">16</span>
<span id="t30" class="t" style="font-size:13.3px;line-height:15px;top:597.00px;color:#262626;-webkit-text-stroke:0.25px #262626;left:0.35px;transform-origin:0 0;transform:scaleX(0.9394);">17</span>
<span id="t31" class="t" style="font-size:13.3px;line-height:15px;top:617.00px;color:#262626;-webkit-text-stroke:0.25px #262626;left:0.35px;transform-origin:0 0;transform:scaleX(0.9394);">18</span>
<span id="t32" class="t" style="font-size:13.3px;line-height:15px;top:637.00px;color:#262626;-webkit-text-stroke:0.25px #262626;left:0.35px;transform-origin:0 0;transform:scaleX(0.9394);">19</span>
<span id="t33" class="t" style="font-size:13.3px;line-height:15px;top:217.00px;color:#000;font-weight:bold;left:597.40px;transform-origin:0 0;transform:scaleX(0.9576);">сформовано: 16.09.2025 17:26:21</span>
<span id="t34" class="t" style="font-size:13.3px;line-height:15px;top:257.00px;color:#000;font-weight:bold;left:433.40px;transform-origin:0 0;transform:scaleX(0.9326);">Сота.Каса</span>
<span id="t35" class="t" style="font-size:13.3px;line-height:15px;top:277.00px;color:#000;font-weight:bold;left:297.40px;transform-origin:0 0;transform:scaleX(0.9841);">Звіт про підсумки продажів у розрізі номенклатури</span>
<span id="t36" class="t" style="font-size:13.3px;line-height:15px;top:297.00px;color:#000;font-weight:bold;left:410.90px;transform-origin:0 0;transform:scaleX(0.9350);">товарів та послуг</span>
<span id="t37" class="t" style="font-size:13.3px;line-height:15px;top:317.00px;color:#000;font-weight:bold;left:352.40px;transform-origin:0 0;transform:scaleX(0.9694);">за період з 16.09.2025 по 16.09.2025</span>
<span id="t38" class="t" style="font-size:13.3px;line-height:15px;top:437.00px;color:#000;font-weight:bold;left:21.60px;transform-origin:0 0;transform:scaleX(0.9860);">Артикул</span>
<span id="t39" class="t" style="font-size:13.3px;line-height:15px;top:437.00px;color:#000;font-weight:bold;left:135.00px;transform-origin:0 0;transform:scaleX(0.9789);">Найменування</span>
<span id="t40" class="t" style="font-size:13.3px;line-height:15px;top:437.00px;color:#000;font-weight:bold;left:302.40px;transform-origin:0 0;transform:scaleX(0.9777);">Ціна</span>
<span id="t41" class="t" style="font-size:13.3px;line-height:15px;top:437.00px;color:#000;font-weight:bold;left:361.40px;transform-origin:0 0;transform:scaleX(0.9846);">ПДВ</span>
<span id="t42" class="t" style="font-size:13.3px;line-height:15px;top:437.00px;color:#000;font-weight:bold;left:425.90px;transform-origin:0 0;transform:scaleX(0.9323);">АП</span>
<span id="t43" class="t" style="font-size:13.3px;line-height:15px;top:417.00px;color:#000;font-weight:bold;left:467.90px;transform-origin:0 0;transform:scaleX(0.9715);">Кількіст</span>
<span id="t44" class="t" style="font-size:13.3px;line-height:15px;top:437.00px;color:#000;font-weight:bold;left:490.90px;transform-origin:0 0;transform:scaleX(0.8794);">ь</span>
<span id="t45" class="t" style="font-size:13.3px;line-height:15px;top:397.00px;color:#000;font-weight:bold;left:526.90px;transform-origin:0 0;transform:scaleX(1.0134);">Одиниц</span>
<span id="t46" class="t" style="font-size:13.3px;line-height:15px;top:417.00px;color:#000;font-weight:bold;left:548.40px;transform-origin:0 0;transform:scaleX(1.0559);">я</span>
<span id="t47" class="t" style="font-size:13.3px;line-height:15px;top:437.00px;color:#000;font-weight:bold;left:528.40px;transform-origin:0 0;transform:scaleX(1.0545);">виміру</span>
<span id="t48" class="t" style="font-size:13.3px;line-height:15px;top:437.00px;color:#000;font-weight:bold;left:595.40px;transform-origin:0 0;transform:scaleX(0.9649);">Сума</span>
<span id="t49" class="t" style="font-size:13.3px;line-height:15px;top:437.00px;color:#000;font-weight:bold;left:647.40px;transform-origin:0 0;transform:scaleX(1.0038);">Знижка</span>
<span id="t50" class="t" style="font-size:13.3px;line-height:15px;top:437.00px;color:#000;font-weight:bold;left:710.90px;transform-origin:0 0;transform:scaleX(0.9844);">Разом</span>
<span id="t51" class="t" style="font-size:13.3px;line-height:15px;top:417.00px;color:#000;font-weight:bold;left:762.40px;transform-origin:0 0;transform:scaleX(0.9444);">Операці</span>
<span id="t52" class="t" style="font-size:13.3px;line-height:15px;top:437.00px;color:#000;font-weight:bold;left:784.90px;transform-origin:0 0;transform:scaleX(1.0559);">я</span>
<span id="t53" class="t" style="font-size:13.3px;line-height:15px;top:357.00px;color:#000;font-weight:bold;left:837.40px;transform-origin:0 0;transform:scaleX(0.9317);">Тип</span>
<span id="t54" class="t" style="font-size:13.3px;line-height:15px;top:377.00px;color:#000;font-weight:bold;left:824.40px;transform-origin:0 0;transform:scaleX(0.9737);">(товар -</span>
<span id="t55" class="t" style="font-size:13.3px;line-height:15px;top:397.00px;color:#000;font-weight:bold;left:843.40px;transform-origin:0 0;transform:scaleX(0.9194);">1,</span>
<span id="t56" class="t" style="font-size:13.3px;line-height:15px;top:417.00px;color:#000;font-weight:bold;left:819.90px;transform-origin:0 0;transform:scaleX(0.9599);">послуга -</span>
<span id="t57" class="t" style="font-size:13.3px;line-height:15px;top:437.00px;color:#000;font-weight:bold;left:842.40px;transform-origin:0 0;transform:scaleX(1.0314);">2)</span>
<span id="t58" class="t" style="font-size:13.3px;line-height:15px;top:437.00px;color:#000;font-weight:bold;left:934.90px;transform-origin:0 0;transform:scaleX(0.9574);">Група</span>
<span id="t59" class="t" style="font-size:13.3px;line-height:15px;top:457.00px;color:#000;-webkit-text-stroke:0.25px #000;left:21.60px;transform-origin:0 0;transform:scaleX(0.9518);">00003</span>
<span id="t60" class="t" style="font-size:13.3px;line-height:15px;top:457.00px;color:#000;-webkit-text-stroke:0.25px #000;left:80.90px;transform-origin:0 0;transform:scaleX(1.0324);">Лампочка 60W</span>
<span id="t61" class="t" style="font-size:13.3px;line-height:15px;top:457.00px;color:#000;-webkit-text-stroke:0.25px #000;left:329.44px;transform-origin:0 0;transform:scaleX(0.9907);">60</span>
<span id="t62" class="t" style="font-size:13.3px;line-height:15px;top:457.00px;color:#000;-webkit-text-stroke:0.25px #000;left:395.87px;transform-origin:0 0;transform:scaleX(0.9762);">0</span>
<span id="t63" class="t" style="font-size:13.3px;line-height:15px;top:457.00px;color:#000;-webkit-text-stroke:0.25px #000;left:454.87px;transform-origin:0 0;transform:scaleX(0.9762);">0</span>
<span id="t64" class="t" style="font-size:13.3px;line-height:15px;top:457.00px;color:#000;-webkit-text-stroke:0.25px #000;left:513.87px;transform-origin:0 0;transform:scaleX(0.9762);">1</span>
<span id="t65" class="t" style="font-size:13.3px;line-height:15px;top:457.00px;color:#000;-webkit-text-stroke:0.25px #000;left:525.40px;transform-origin:0 0;transform:scaleX(1.0503);">Шт</span>
<span id="t66" class="t" style="font-size:13.3px;line-height:15px;top:457.00px;color:#000;-webkit-text-stroke:0.25px #000;left:624.44px;transform-origin:0 0;transform:scaleX(0.9907);">60</span>
<span id="t67" class="t" style="font-size:13.3px;line-height:15px;top:457.00px;color:#000;-webkit-text-stroke:0.25px #000;left:690.87px;transform-origin:0 0;transform:scaleX(0.9762);">0</span>
<span id="t68" class="t" style="font-size:13.3px;line-height:15px;top:457.00px;color:#000;-webkit-text-stroke:0.25px #000;left:727.58px;transform-origin:0 0;transform:scaleX(0.9975);">1000</span>
<span id="t69" class="t" style="font-size:13.3px;line-height:15px;top:457.00px;color:#000;-webkit-text-stroke:0.25px #000;left:762.40px;transform-origin:0 0;transform:scaleX(1.0331);">Продаж</span>
<span id="t70" class="t" style="font-size:13.3px;line-height:15px;top:457.00px;color:#000;-webkit-text-stroke:0.25px #000;left:867.87px;transform-origin:0 0;transform:scaleX(0.9762);">1</span>
<span id="t71" class="t" style="font-size:13.3px;line-height:15px;top:457.00px;color:#000;-webkit-text-stroke:0.25px #000;left:880.90px;transform-origin:0 0;transform:scaleX(1.0142);">Товар</span>
<span id="t72" class="t" style="font-size:13.3px;line-height:15px;top:477.00px;color:#000;-webkit-text-stroke:0.25px #000;left:61.44px;transform-origin:0 0;transform:scaleX(0.9907);">46</span>
<span id="t73" class="t" style="font-size:13.3px;line-height:15px;top:477.00px;color:#000;-webkit-text-stroke:0.25px #000;left:80.90px;transform-origin:0 0;transform:scaleX(1.0383);">Послуги з демонтажу розетки</span>
<span id="t74" class="t" style="font-size:13.3px;line-height:15px;top:477.00px;color:#000;-webkit-text-stroke:0.25px #000;left:322.01px;transform-origin:0 0;transform:scaleX(0.9956);">300</span>
<span id="t75" class="t" style="font-size:13.3px;line-height:15px;top:477.00px;color:#000;-webkit-text-stroke:0.25px #000;left:395.87px;transform-origin:0 0;transform:scaleX(0.9762);">0</span>
<span id="t76" class="t" style="font-size:13.3px;line-height:15px;top:477.00px;color:#000;-webkit-text-stroke:0.25px #000;left:454.87px;transform-origin:0 0;transform:scaleX(0.9762);">0</span>
<span id="t77" class="t" style="font-size:13.3px;line-height:15px;top:477.00px;color:#000;-webkit-text-stroke:0.25px #000;left:513.87px;transform-origin:0 0;transform:scaleX(0.9762);">2</span>
<span id="t78" class="t" style="font-size:13.3px;line-height:15px;top:477.00px;color:#000;-webkit-text-stroke:0.25px #000;left:525.40px;transform-origin:0 0;transform:scaleX(1.0503);">Шт</span>
<span id="t79" class="t" style="font-size:13.3px;line-height:15px;top:477.00px;color:#000;-webkit-text-stroke:0.25px #000;left:617.01px;transform-origin:0 0;transform:scaleX(0.9956);">300</span>
<span id="t80" class="t" style="font-size:13.3px;line-height:15px;top:477.00px;color:#000;-webkit-text-stroke:0.25px #000;left:690.87px;transform-origin:0 0;transform:scaleX(0.9762);">0</span>
<span id="t81" class="t" style="font-size:13.3px;line-height:15px;top:477.00px;color:#000;-webkit-text-stroke:0.25px #000;left:735.01px;transform-origin:0 0;transform:scaleX(0.9956);">600</span>
<span id="t82" class="t" style="font-size:13.3px;line-height:15px;top:477.00px;color:#000;-webkit-text-stroke:0.25px #000;left:762.40px;transform-origin:0 0;transform:scaleX(1.0331);">Продаж</span>
<span id="t83" class="t" style="font-size:13.3px;line-height:15px;top:477.00px;color:#000;-webkit-text-stroke:0.25px #000;left:867.87px;transform-origin:0 0;transform:scaleX(0.9762);">2</span>
<span id="t84" class="t" style="font-size:13.3px;line-height:15px;top:477.00px;color:#000;-webkit-text-stroke:0.25px #000;left:880.90px;transform-origin:0 0;transform:scaleX(1.0046);">Послуга</span>
<span id="t85" class="t" style="font-size:13.3px;line-height:15px;top:497.00px;color:#000;-webkit-text-stroke:0.25px #000;left:54.01px;transform-origin:0 0;transform:scaleX(1.0926);">111</span>
<span id="t86" class="t" style="font-size:13.3px;line-height:15px;top:497.00px;color:#000;-webkit-text-stroke:0.25px #000;left:80.90px;transform-origin:0 0;transform:scaleX(1.0137);">Світлодіодна лампа LW-478O</span>
<span id="t87" class="t" style="font-size:13.3px;line-height:15px;top:497.00px;color:#000;-webkit-text-stroke:0.25px #000;left:314.58px;transform-origin:0 0;transform:scaleX(0.9975);">1500</span>
<span id="t88" class="t" style="font-size:13.3px;line-height:15px;top:497.00px;color:#000;-webkit-text-stroke:0.25px #000;left:395.87px;transform-origin:0 0;transform:scaleX(0.9762);">0</span>
<span id="t89" class="t" style="font-size:13.3px;line-height:15px;top:497.00px;color:#000;-webkit-text-stroke:0.25px #000;left:454.87px;transform-origin:0 0;transform:scaleX(0.9762);">0</span>
<span id="t90" class="t" style="font-size:13.3px;line-height:15px;top:497.00px;color:#000;-webkit-text-stroke:0.25px #000;left:513.87px;transform-origin:0 0;transform:scaleX(0.9762);">1</span>
<span id="t91" class="t" style="font-size:13.3px;line-height:15px;top:497.00px;color:#000;-webkit-text-stroke:0.25px #000;left:525.40px;transform-origin:0 0;transform:scaleX(0.9961);">шт</span>
<span id="t92" class="t" style="font-size:13.3px;line-height:15px;top:497.00px;color:#000;-webkit-text-stroke:0.25px #000;left:609.58px;transform-origin:0 0;transform:scaleX(0.9975);">1500</span>
<span id="t93" class="t" style="font-size:13.3px;line-height:15px;top:497.00px;color:#000;-webkit-text-stroke:0.25px #000;left:690.87px;transform-origin:0 0;transform:scaleX(0.9762);">0</span>
<span id="t94" class="t" style="font-size:13.3px;line-height:15px;top:497.00px;color:#000;-webkit-text-stroke:0.25px #000;left:727.58px;transform-origin:0 0;transform:scaleX(0.9975);">1500</span>
<span id="t95" class="t" style="font-size:13.3px;line-height:15px;top:497.00px;color:#000;-webkit-text-stroke:0.25px #000;left:762.40px;transform-origin:0 0;transform:scaleX(1.0331);">Продаж</span>
<span id="t96" class="t" style="font-size:13.3px;line-height:15px;top:497.00px;color:#000;-webkit-text-stroke:0.25px #000;left:867.87px;transform-origin:0 0;transform:scaleX(0.9762);">1</span>
<span id="t97" class="t" style="font-size:13.3px;line-height:15px;top:497.00px;color:#000;-webkit-text-stroke:0.25px #000;left:880.90px;transform-origin:0 0;transform:scaleX(1.0142);">Товар</span>
<span id="t98" class="t" style="font-size:13.3px;line-height:15px;top:517.00px;color:#000;-webkit-text-stroke:0.25px #000;left:39.15px;transform-origin:0 0;">12136</span>
<span id="t99" class="t" style="font-size:13.3px;line-height:15px;top:517.00px;color:#000;-webkit-text-stroke:0.25px #000;left:80.90px;transform-origin:0 0;transform:scaleX(1.0286);">Виклик та консультація майстра</span>
<span id="t100" class="t" style="font-size:13.3px;line-height:15px;top:517.00px;color:#000;-webkit-text-stroke:0.25px #000;left:322.01px;transform-origin:0 0;transform:scaleX(0.9956);">500</span>
<span id="t101" class="t" style="font-size:13.3px;line-height:15px;top:517.00px;color:#000;-webkit-text-stroke:0.25px #000;left:395.87px;transform-origin:0 0;transform:scaleX(0.9762);">0</span>
<span id="t102" class="t" style="font-size:13.3px;line-height:15px;top:517.00px;color:#000;-webkit-text-stroke:0.25px #000;left:454.87px;transform-origin:0 0;transform:scaleX(0.9762);">0</span>
<span id="t103" class="t" style="font-size:13.3px;line-height:15px;top:517.00px;color:#000;-webkit-text-stroke:0.25px #000;left:513.87px;transform-origin:0 0;transform:scaleX(0.9762);">1</span>
<span id="t104" class="t" style="font-size:13.3px;line-height:15px;top:517.00px;color:#000;-webkit-text-stroke:0.25px #000;left:525.40px;transform-origin:0 0;transform:scaleX(0.9961);">шт</span>
<span id="t105" class="t" style="font-size:13.3px;line-height:15px;top:517.00px;color:#000;-webkit-text-stroke:0.25px #000;left:617.01px;transform-origin:0 0;transform:scaleX(0.9956);">500</span>
<span id="t106" class="t" style="font-size:13.3px;line-height:15px;top:517.00px;color:#000;-webkit-text-stroke:0.25px #000;left:690.87px;transform-origin:0 0;transform:scaleX(0.9762);">0</span>
<span id="t107" class="t" style="font-size:13.3px;line-height:15px;top:517.00px;color:#000;-webkit-text-stroke:0.25px #000;left:735.01px;transform-origin:0 0;transform:scaleX(0.9956);">500</span>
<span id="t108" class="t" style="font-size:13.3px;line-height:15px;top:517.00px;color:#000;-webkit-text-stroke:0.25px #000;left:762.40px;transform-origin:0 0;transform:scaleX(1.0331);">Продаж</span>
<span id="t109" class="t" style="font-size:13.3px;line-height:15px;top:517.00px;color:#000;-webkit-text-stroke:0.25px #000;left:867.87px;transform-origin:0 0;transform:scaleX(0.9762);">2</span>
<span id="t110" class="t" style="font-size:13.3px;line-height:15px;top:517.00px;color:#000;-webkit-text-stroke:0.25px #000;left:880.90px;transform-origin:0 0;transform:scaleX(1.0046);">Послуга</span>
<span id="t111" class="t" style="font-size:12.6px;line-height:14px;top:10.00px;color:#444444;left:8.90px;transform-origin:0 0;transform:scaleX(0.9752);">Файл</span>
<span id="t112" class="t" style="font-size:12.6px;line-height:14px;top:10.00px;color:#444444;left:152.40px;transform-origin:0 0;transform:scaleX(0.9838);">Вставлення</span>
<span id="t113" class="t" style="font-size:12.6px;line-height:14px;top:10.00px;color:#444444;left:252.90px;transform-origin:0 0;transform:scaleX(1.0438);">Макет сторінки</span>
<span id="t114" class="t" style="font-size:12.6px;line-height:14px;top:10.00px;color:#444444;left:376.40px;transform-origin:0 0;transform:scaleX(1.0360);">Формули</span>
<span id="t115" class="t" style="font-size:12.6px;line-height:14px;top:10.00px;color:#444444;left:460.40px;transform-origin:0 0;transform:scaleX(1.0950);">Дані</span>
<span id="t116" class="t" style="font-size:12.6px;line-height:14px;top:10.00px;color:#444444;left:519.40px;transform-origin:0 0;transform:scaleX(1.0074);">Рецензування</span>
<span id="t117" class="t" style="font-size:12.6px;line-height:14px;top:10.00px;color:#444444;left:634.90px;transform-origin:0 0;transform:scaleX(1.0260);">Подання</span>
<span id="t118" class="t" style="font-size:12.6px;line-height:14px;top:10.00px;color:#444444;left:717.40px;transform-origin:0 0;transform:scaleX(1.0527);">Довідка</span>
<span id="t119" class="t" style="font-size:12.6px;line-height:14px;top:10.00px;color:#444444;left:795.90px;transform-origin:0 0;transform:scaleX(1.0759);">Acrobat</span>
<span id="t120" class="t" style="font-size:12.6px;line-height:14px;top:10.00px;color:#3b3a39;font-weight:bold;left:67.60px;transform-origin:0 0;transform:scaleX(1.0302);">Основне</span>
<span id="t121" class="t" style="font-size:12.6px;line-height:14px;top:10.00px;color:#185c37;font-weight:bold;left:1002.40px;transform-origin:0 0;transform:scaleX(1.0051);">Спільний доступ</span>
<span id="t122" class="t" style="font-size:10.8px;line-height:12px;top:113.00px;color:#4a4a4a;left:2.90px;transform-origin:0 0;transform:scaleX(1.0570);">Буфер обміну</span>
<span id="t123" class="t" style="font-size:10.8px;line-height:12px;top:113.00px;color:#4a4a4a;left:190.40px;transform-origin:0 0;transform:scaleX(1.0892);">Шрифт</span>
<span id="t124" class="t" style="font-size:10.8px;line-height:12px;top:113.00px;color:#4a4a4a;left:378.20px;transform-origin:0 0;transform:scaleX(1.0886);">Вирівнювання</span>
<span id="t125" class="t" style="font-size:10.8px;line-height:12px;top:113.00px;color:#4a4a4a;left:542.50px;transform-origin:0 0;transform:scaleX(1.0076);">Число</span>
<span id="t126" class="t" style="font-size:10.8px;line-height:12px;top:113.00px;color:#4a4a4a;left:693.10px;transform-origin:0 0;transform:scaleX(1.0224);">Стилі</span>
<span id="t127" class="t" style="font-size:10.8px;line-height:12px;top:113.00px;color:#4a4a4a;left:830.60px;transform-origin:0 0;transform:scaleX(1.1127);">Клітинки</span>
<span id="t128" class="t" style="font-size:10.8px;line-height:12px;top:113.00px;color:#4a4a4a;left:922.60px;transform-origin:0 0;transform:scaleX(1.0467);">Редагування</span>
<span id="t129" class="t" style="font-size:10.8px;line-height:12px;top:113.00px;color:#4a4a4a;left:1004.80px;transform-origin:0 0;transform:scaleX(1.0897);">Adobe Acrobat</span>
<span id="t130" class="t" style="font-size:12.6px;line-height:14px;top:73.00px;color:#3b3a39;left:3.90px;transform-origin:0 0;transform:scaleX(0.9191);">Вставити</span>
<span id="t131" class="t" style="font-size:12.6px;line-height:14px;top:48.00px;color:#262626;left:113.10px;transform-origin:0 0;transform:scaleX(0.9607);">Calibri</span>
<span id="t132" class="t" style="font-size:12.6px;line-height:14px;top:48.00px;color:#262626;left:237.80px;transform-origin:0 0;transform:scaleX(0.8946);">11</span>
<span id="t133" class="t" style="font-size:13.5px;line-height:15px;top:78.00px;color:#262626;font-weight:bold;left:114.10px;transform-origin:0 0;transform:scaleX(1.2046);">Ж</span>
<span id="t134" class="t" style="font-size:13.5px;line-height:15px;top:78.00px;color:#4a4a4a;font-style:italic;left:140.00px;transform-origin:0 0;transform:scaleX(1.2424);">К</span>
<span id="t135" class="t" style="font-size:13px;line-height:15px;top:77.00px;color:#3b3a39;left:163.70px;transform-origin:0 0;transform:scaleX(1.0060);">П</span>
<span id="t136" class="t" style="font-size:12.6px;line-height:14px;top:40.00px;color:#262626;left:526.30px;transform-origin:0 0;transform:scaleX(0.9692);">Загальний</span>
<span id="t137" class="t" style="font-size:19px;line-height:21px;top:60.00px;color:#505050;left:566.00px;transform-origin:0 0;transform:scaleX(0.9582);">%</span>
<span id="t138" class="t" style="font-size:8.5px;line-height:10px;top:65.00px;color:#666;left:589.00px;transform-origin:0 0;transform:scaleX(1.2123);">000</span>
<span id="t139" class="t" style="font-size:12.6px;line-height:14px;top:39.00px;color:#3b3a39;left:647.00px;transform-origin:0 0;transform:scaleX(0.9453);">Умовне форматування</span>
<span id="t140" class="t" style="font-size:12.6px;line-height:14px;top:62.00px;color:#3b3a39;left:647.00px;transform-origin:0 0;transform:scaleX(0.9606);">Формат таблиці</span>
<span id="t141" class="t" style="font-size:12.6px;line-height:14px;top:85.00px;color:#3b3a39;left:647.00px;transform-origin:0 0;transform:scaleX(0.9734);">Стилі клітинок</span>
<span id="t142" class="t" style="font-size:12.6px;line-height:14px;top:39.00px;color:#3b3a39;left:829.10px;transform-origin:0 0;transform:scaleX(0.9098);">Вставити</span>
<span id="t143" class="t" style="font-size:12.6px;line-height:14px;top:62.00px;color:#3b3a39;left:829.10px;transform-origin:0 0;transform:scaleX(0.9143);">Видалити</span>
<span id="t144" class="t" style="font-size:12.6px;line-height:14px;top:85.00px;color:#3b3a39;left:829.10px;transform-origin:0 0;transform:scaleX(0.9587);">Формат</span>
<span id="t145" class="t" style="font-size:12.6px;line-height:14px;top:73.00px;color:#3b3a39;left:1018.00px;transform-origin:0 0;transform:scaleX(0.9373);">Створити</span>
<span id="t146" class="t" style="font-size:12.6px;line-height:14px;top:89.00px;color:#3b3a39;left:1015.50px;transform-origin:0 0;transform:scaleX(0.9127);">PDF-файл</span>
<span id="t147" class="t" style="font-size:12.4px;line-height:14px;top:145.00px;color:#444;left:6.00px;transform-origin:0 0;transform:scaleX(0.9787);">R26C16</span>
<span id="t148" class="t" style="font-size:13px;line-height:15px;top:656.00px;color:#217346;font-weight:bold;left:105.70px;transform-origin:0 0;transform:scaleX(0.9662);">Sheet1</span>
<span id="t149" class="t" style="font-size:17px;line-height:19px;top:44.00px;color:#3b3a39;left:283.40px;transform-origin:0 0;transform:scaleX(1.0579);">A</span>
<span id="t150" class="t" style="font-size:13.1px;line-height:15px;top:47.00px;color:#3b3a39;left:309.20px;transform-origin:0 0;transform:scaleX(1.0991);">A</span>
<span id="t151" class="t" style="font-size:13.7px;line-height:15px;top:77.00px;color:#3b3a39;left:294.80px;transform-origin:0 0;transform:scaleX(1.1815);">A</span>
</body></html>
